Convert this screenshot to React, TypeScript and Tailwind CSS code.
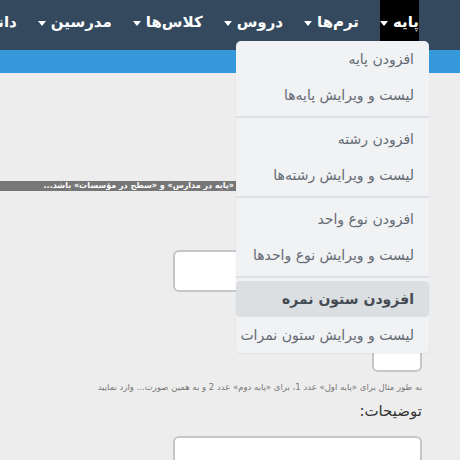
import React from 'react';

const navItems = ['پایه', 'ترم‌ها', 'دروس', 'کلاس‌ها', 'مدرسین', 'دانشجویان'];

const menuGroups = [
  ['افزودن پایه', 'لیست و ویرایش پایه‌ها'],
  ['افزودن رشته', 'لیست و ویرایش رشته‌ها'],
  ['افزودن نوع واحد', 'لیست و ویرایش نوع واحدها'],
  ['افزودن ستون نمره', 'لیست و ویرایش ستون نمرات'],
];

const Caret = () => (
  <span className="inline-block w-0 h-0 border-l-[4px] border-r-[4px] border-t-[5px] border-l-transparent border-r-transparent border-t-white mt-[2px]" />
);

export default function App() {
  const hovered = 'افزودن ستون نمره';

  return (
    <div
      dir="rtl"
      className="relative w-[460px] h-[460px] overflow-hidden bg-[#ededed]"
      style={{ fontFamily: '"DejaVu Sans", "Noto Sans", sans-serif' }}
    >
      {/* Top navbar */}
      <nav className="h-[50px] bg-[#34495e] flex pr-[41px] gap-[21px] whitespace-nowrap">
        {navItems.map((item, i) => (
          <div
            key={item}
            className={`h-full flex items-center gap-[5px] pb-[6px] text-white text-[15px] font-bold ${
              i === 0 ? 'bg-black' : ''
            }`}
          >
            <span>{item}</span>
            <Caret />
          </div>
        ))}
      </nav>
      <div className="h-[23px] bg-[#3498db]" />

      {/* Form body */}
      <div className="flex flex-col items-start pr-[38px] pt-[177px]">
        <div className="w-[249px] h-[42px] bg-white border-2 border-[#c3c7cb] rounded-[6px]" />
        {/* label for the order field sits under the open menu */}
        <div className="mt-[38px] w-[50px] h-[42px] bg-white border-2 border-[#c3c7cb] rounded-[6px]" />
        <p className="mt-[9px] text-[8.5px] text-[#777] leading-[12px]">
          به طور مثال برای «پایه اول» عدد 1، برای «پایه دوم» عدد 2 و به همین صورت... وارد نمایید
        </p>
        <label className="mt-[8px] text-[15px] text-[#333] leading-[20px]">توضیحات:</label>
        <div className="mt-[15px] w-[249px] h-[80px] bg-white border-2 border-[#c3c7cb] rounded-[6px]" />
      </div>

      {/* Tooltip strip */}
      <div className="absolute left-0 top-[181px] w-[300px] h-[10px] bg-[#777] flex items-center pr-[66px]">
        <span className="text-[8px] font-bold text-white leading-none whitespace-nowrap">
          «پایه در مدارس» و «سطح در مؤسسات» باشد...
        </span>
      </div>

      {/* Dropdown menu */}
      <div className="absolute left-[236px] top-[41px] w-[193px] bg-[#f1f2f4] rounded-[5px] shadow-[0_1px_2px_rgba(0,0,0,0.05)]">
        {menuGroups.map((group, gi) => (
          <div key={gi}>
            {gi > 0 && <div className="my-[3px] h-[2px] bg-[#dcdfe3]" />}
            {group.map((label) => (
              <div
                key={label}
                className={`h-[36px] flex items-center pr-[15px] text-[14px] rounded-[4px] whitespace-nowrap ${
                  label === hovered ? 'bg-[#dcdfe2] text-[#444a52] font-semibold' : 'text-[#646b75]'
                }`}
              >
                {label}
              </div>
            ))}
          </div>
        ))}
      </div>
    </div>
  );
}
